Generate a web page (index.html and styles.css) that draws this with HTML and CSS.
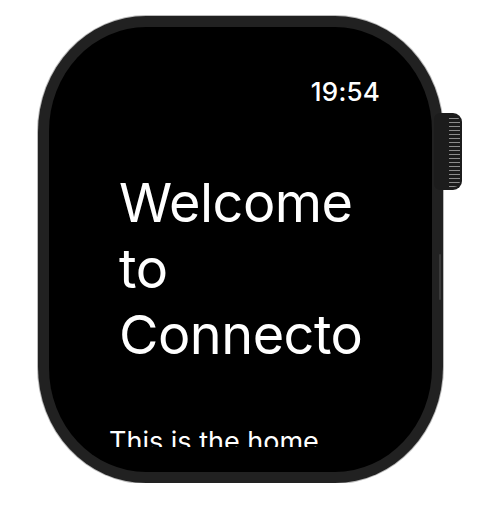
FILE: index.html
```html
<!DOCTYPE html>
<html lang="en">
<head>
<meta charset="utf-8">
<title>Connecto Watch</title>
<link rel="stylesheet" href="styles.css">
</head>
<body>
  <div class="watch">
    <div class="crown"><div class="ribs"></div></div>
    <div class="side-button"></div>
    <div class="screen">
      <div class="time">19:54</div>
      <h1 class="title">Welcome to Connecto</h1>
      <div class="subtitle-clip">
        <p class="subtitle">This is the home</p>
      </div>
    </div>
  </div>
</body>
</html>
```
FILE: styles.css
```css
html, body {
  margin: 0;
  padding: 0;
  background: #ffffff;
}

body {
  font-family: Inter, "Noto Sans", "Liberation Sans", sans-serif;
  padding: 16px 0 0 38px;
}

.watch {
  position: relative;
  width: 405px;
  height: 467px;
  box-sizing: border-box;
  padding: 11px;
  background: #212121;
  border-radius: 108px / 116px;
  box-shadow: 0 0 0 1px rgba(60, 60, 60, 0.35);
}

.crown {
  position: absolute;
  left: 396px;
  top: 97px;
  width: 28px;
  height: 77px;
  background: #1c1c1c;
  border-radius: 6px 9px 9px 6px;
  z-index: 0;
  overflow: hidden;
}

.ribs {
  position: absolute;
  right: 2px;
  top: 3px;
  bottom: 3px;
  width: 11px;
  background: repeating-linear-gradient(to bottom, #1a1a1a 0, #1a1a1a 2px, #8a8a8a 2px, #8a8a8a 3px, #1a1a1a 3px, #1a1a1a 4px);
  border-radius: 0 6px 6px 0;
}

.side-button {
  position: absolute;
  left: 401px;
  top: 238px;
  width: 2px;
  height: 46px;
  background: #3a3a3a;
  border-radius: 1px;
}

.screen {
  position: relative;
  z-index: 1;
  height: 100%;
  box-sizing: border-box;
  background: #000000;
  border-radius: 97px / 104px;
  overflow: hidden;
  display: flex;
  flex-direction: column;
  padding: 50px 52px 0 70px;
  color: #ffffff;
}

.time {
  align-self: flex-end;
  font-size: 26px;
  line-height: 30px;
  font-weight: 500;
  letter-spacing: 0.2px;
}

.title {
  margin: 63px 0 0 0;
  font-size: 54px;
  line-height: 66px;
  font-weight: 400;
  width: 250px;
  letter-spacing: -0.5px;
}

.subtitle-clip {
  margin: 57px 0 0 -10px;
  height: 22px;
  overflow: hidden;
}

.subtitle {
  margin: 0;
  font-size: 27px;
  line-height: 33px;
  white-space: nowrap;
}
```
